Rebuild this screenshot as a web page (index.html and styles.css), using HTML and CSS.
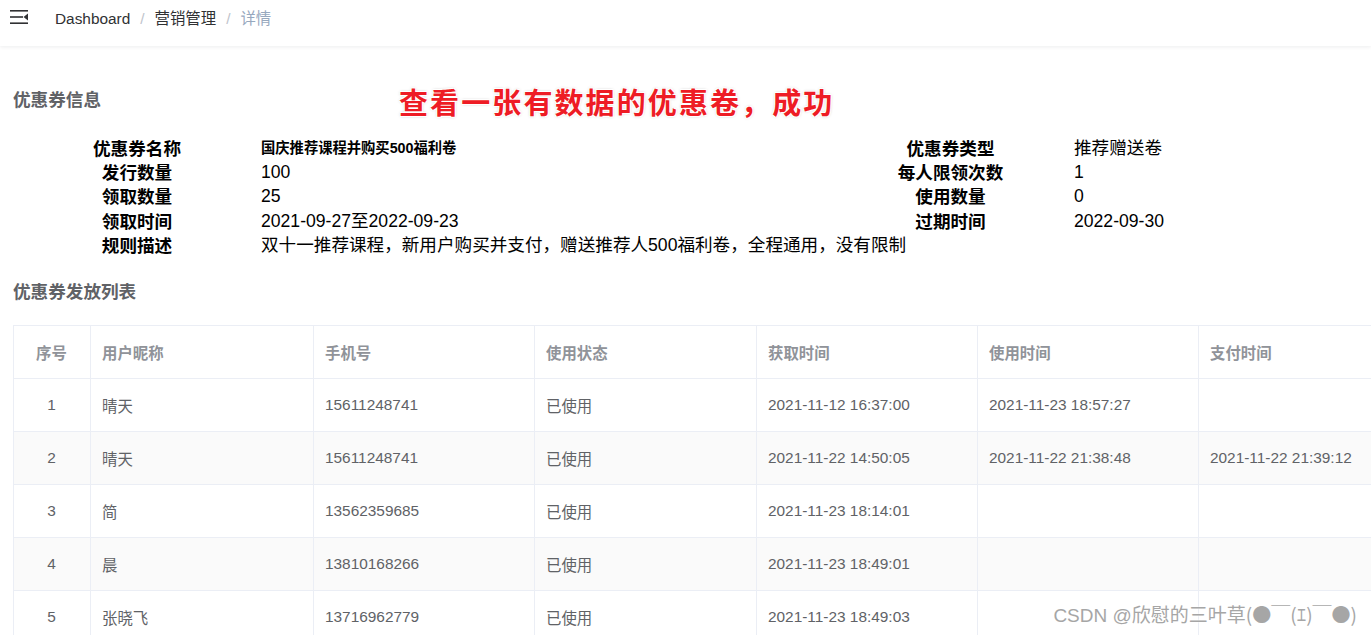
FILE: index.html
```html
<!DOCTYPE html>
<html lang="zh-CN">
<head>
<meta charset="utf-8">
<title>详情</title>
<link rel="stylesheet" href="styles.css">
</head>
<body>
<div class="navbar">
  <svg class="hamburger" width="20" height="16" viewBox="0 0 20 16">
    <rect x="0" y="0" width="18" height="1.6" fill="#303133"/>
    <rect x="0" y="6.2" width="13" height="1.6" fill="#303133"/>
    <polygon points="13.5,7 18,3.5 18,10.5" fill="#303133"/>
    <rect x="0" y="12.4" width="18" height="1.6" fill="#303133"/>
  </svg>
  <nav class="breadcrumb">
    <span class="crumb">Dashboard</span>
    <span class="sep">/</span>
    <span class="crumb">营销管理</span>
    <span class="sep">/</span>
    <span class="crumb current">详情</span>
  </nav>
</div>

<main class="app-main">
  <h3 class="section-title">优惠券信息</h3>
  <div class="annotation">查看一张有数据的优惠卷，成功</div>

  <div class="info-grid">
    <div class="label">优惠券名称</div>
    <div class="value name">国庆推荐课程并购买500福利卷</div>
    <div class="label">优惠券类型</div>
    <div class="value">推荐赠送卷</div>

    <div class="label">发行数量</div>
    <div class="value">100</div>
    <div class="label">每人限领次数</div>
    <div class="value">1</div>

    <div class="label">领取数量</div>
    <div class="value">25</div>
    <div class="label">使用数量</div>
    <div class="value">0</div>

    <div class="label">领取时间</div>
    <div class="value">2021-09-27至2022-09-23</div>
    <div class="label">过期时间</div>
    <div class="value">2022-09-30</div>

    <div class="label">规则描述</div>
    <div class="value wide">双十一推荐课程，新用户购买并支付，赠送推荐人500福利卷，全程通用，没有限制</div>
  </div>

  <h3 class="section-title second">优惠券发放列表</h3>

  <table class="data-table">
    <colgroup>
      <col class="c-idx"><col class="c-name"><col class="c-221"><col class="c-222"><col class="c-221"><col class="c-221"><col class="c-221">
    </colgroup>
    <thead>
      <tr>
        <th class="center">序号</th>
        <th>用户昵称</th>
        <th>手机号</th>
        <th>使用状态</th>
        <th>获取时间</th>
        <th>使用时间</th>
        <th>支付时间</th>
      </tr>
    </thead>
    <tbody>
      <tr>
        <td class="center">1</td><td>晴天</td><td>15611248741</td><td>已使用</td><td>2021-11-12 16:37:00</td><td>2021-11-23 18:57:27</td><td></td>
      </tr>
      <tr class="striped">
        <td class="center">2</td><td>晴天</td><td>15611248741</td><td>已使用</td><td>2021-11-22 14:50:05</td><td>2021-11-22 21:38:48</td><td>2021-11-22 21:39:12</td>
      </tr>
      <tr>
        <td class="center">3</td><td>简</td><td>13562359685</td><td>已使用</td><td>2021-11-23 18:14:01</td><td></td><td></td>
      </tr>
      <tr class="striped">
        <td class="center">4</td><td>晨</td><td>13810168266</td><td>已使用</td><td>2021-11-23 18:49:01</td><td></td><td></td>
      </tr>
      <tr>
        <td class="center">5</td><td>张晓飞</td><td>13716962779</td><td>已使用</td><td>2021-11-23 18:49:03</td><td></td><td></td>
      </tr>
    </tbody>
  </table>
</main>

<div class="watermark">CSDN @欣慰的三叶草<span class="kao">(●￣(ｴ)￣●)</span></div>
</body>
</html>
```

FILE: styles.css
```css
html, body {
  margin: 0;
  padding: 0;
  background: #fff;
  overflow: hidden;
  height: 635px;
}

body {
  font-family: "Liberation Sans", Arial, "Noto Sans CJK SC", sans-serif;
  color: #303133;
  position: relative;
}

.navbar {
  height: 46px;
  display: flex;
  align-items: flex-start;
  background: #fff;
  box-shadow: 0 1px 4px rgba(0, 21, 41, 0.08);
  position: relative;
}

.hamburger {
  margin: 10px 0 0 10px;
  display: block;
}

.breadcrumb {
  margin-left: 25px;
  font-size: 15.4px;
  line-height: 38px;
  display: flex;
}

.crumb {
  color: #303133;
}

.crumb.current {
  color: #97a8be;
}

.sep {
  color: #c0c4cc;
  margin: 0 10px;
}

.app-main {
  padding: 42px 0 0 13px;
  position: relative;
}

.section-title {
  margin: 0;
  font-size: 17.6px;
  line-height: 24px;
  font-weight: bold;
  color: #606266;
}

.section-title.second {
  margin-top: 23px;
}

.annotation {
  position: absolute;
  left: 399px;
  top: 37px;
  font-family: "Noto Sans CJK SC", sans-serif;
  font-size: 29px;
  line-height: 36px;
  font-weight: bold;
  color: #ee1c25;
  letter-spacing: 2.1px;
  white-space: nowrap;
  text-shadow:
    -1px -1px 0 #fff, 1px -1px 0 #fff, -1px 1px 0 #fff, 1px 1px 0 #fff,
    0 0 3px rgba(0, 0, 0, 0.35);
}

.info-grid {
  margin-top: 24px;
  display: grid;
  grid-template-columns: 248px 566px 247px 1fr;
  grid-auto-rows: 24.2px;
  align-items: center;
}

.label {
  text-align: center;
  font-family: "Noto Sans CJK SC", sans-serif;
  font-weight: bold;
  font-size: 17.6px;
  line-height: 24px;
  color: #000;
}

.value {
  font-size: 17.6px;
  line-height: 24px;
  color: #000;
  white-space: nowrap;
}

.value.name {
  font-size: 14.3px;
  font-weight: bold;
}

.value.wide {
  grid-column: 2 / 5;
}

.data-table {
  margin-top: 21px;
  border-collapse: collapse;
  table-layout: fixed;
  width: 1406px;
  font-size: 15.4px;
  color: #606266;
}

.c-idx { width: 77px; }
.c-name { width: 223px; }
.c-221 { width: 221px; }
.c-222 { width: 222px; }

.data-table th,
.data-table td {
  border: 1px solid #ebeef5;
  height: 53px;
  padding: 0 12px 0 11px;
  text-align: left;
  white-space: nowrap;
  box-sizing: border-box;
}

.data-table th {
  color: #909399;
  font-weight: bold;
  background: #fff;
}

.data-table .center {
  text-align: center;
}

.data-table tr.striped td {
  background: #fafafa;
}

.watermark {
  position: absolute;
  right: 14px;
  bottom: 8px;
  font-size: 19px;
  line-height: 22px;
  color: #a6a6a6;
  text-shadow: 0 0 2px #fff, 0 0 2px #fff;
  white-space: nowrap;
}

.kao {
  font-family: "Noto Sans CJK SC", sans-serif;
}
```
